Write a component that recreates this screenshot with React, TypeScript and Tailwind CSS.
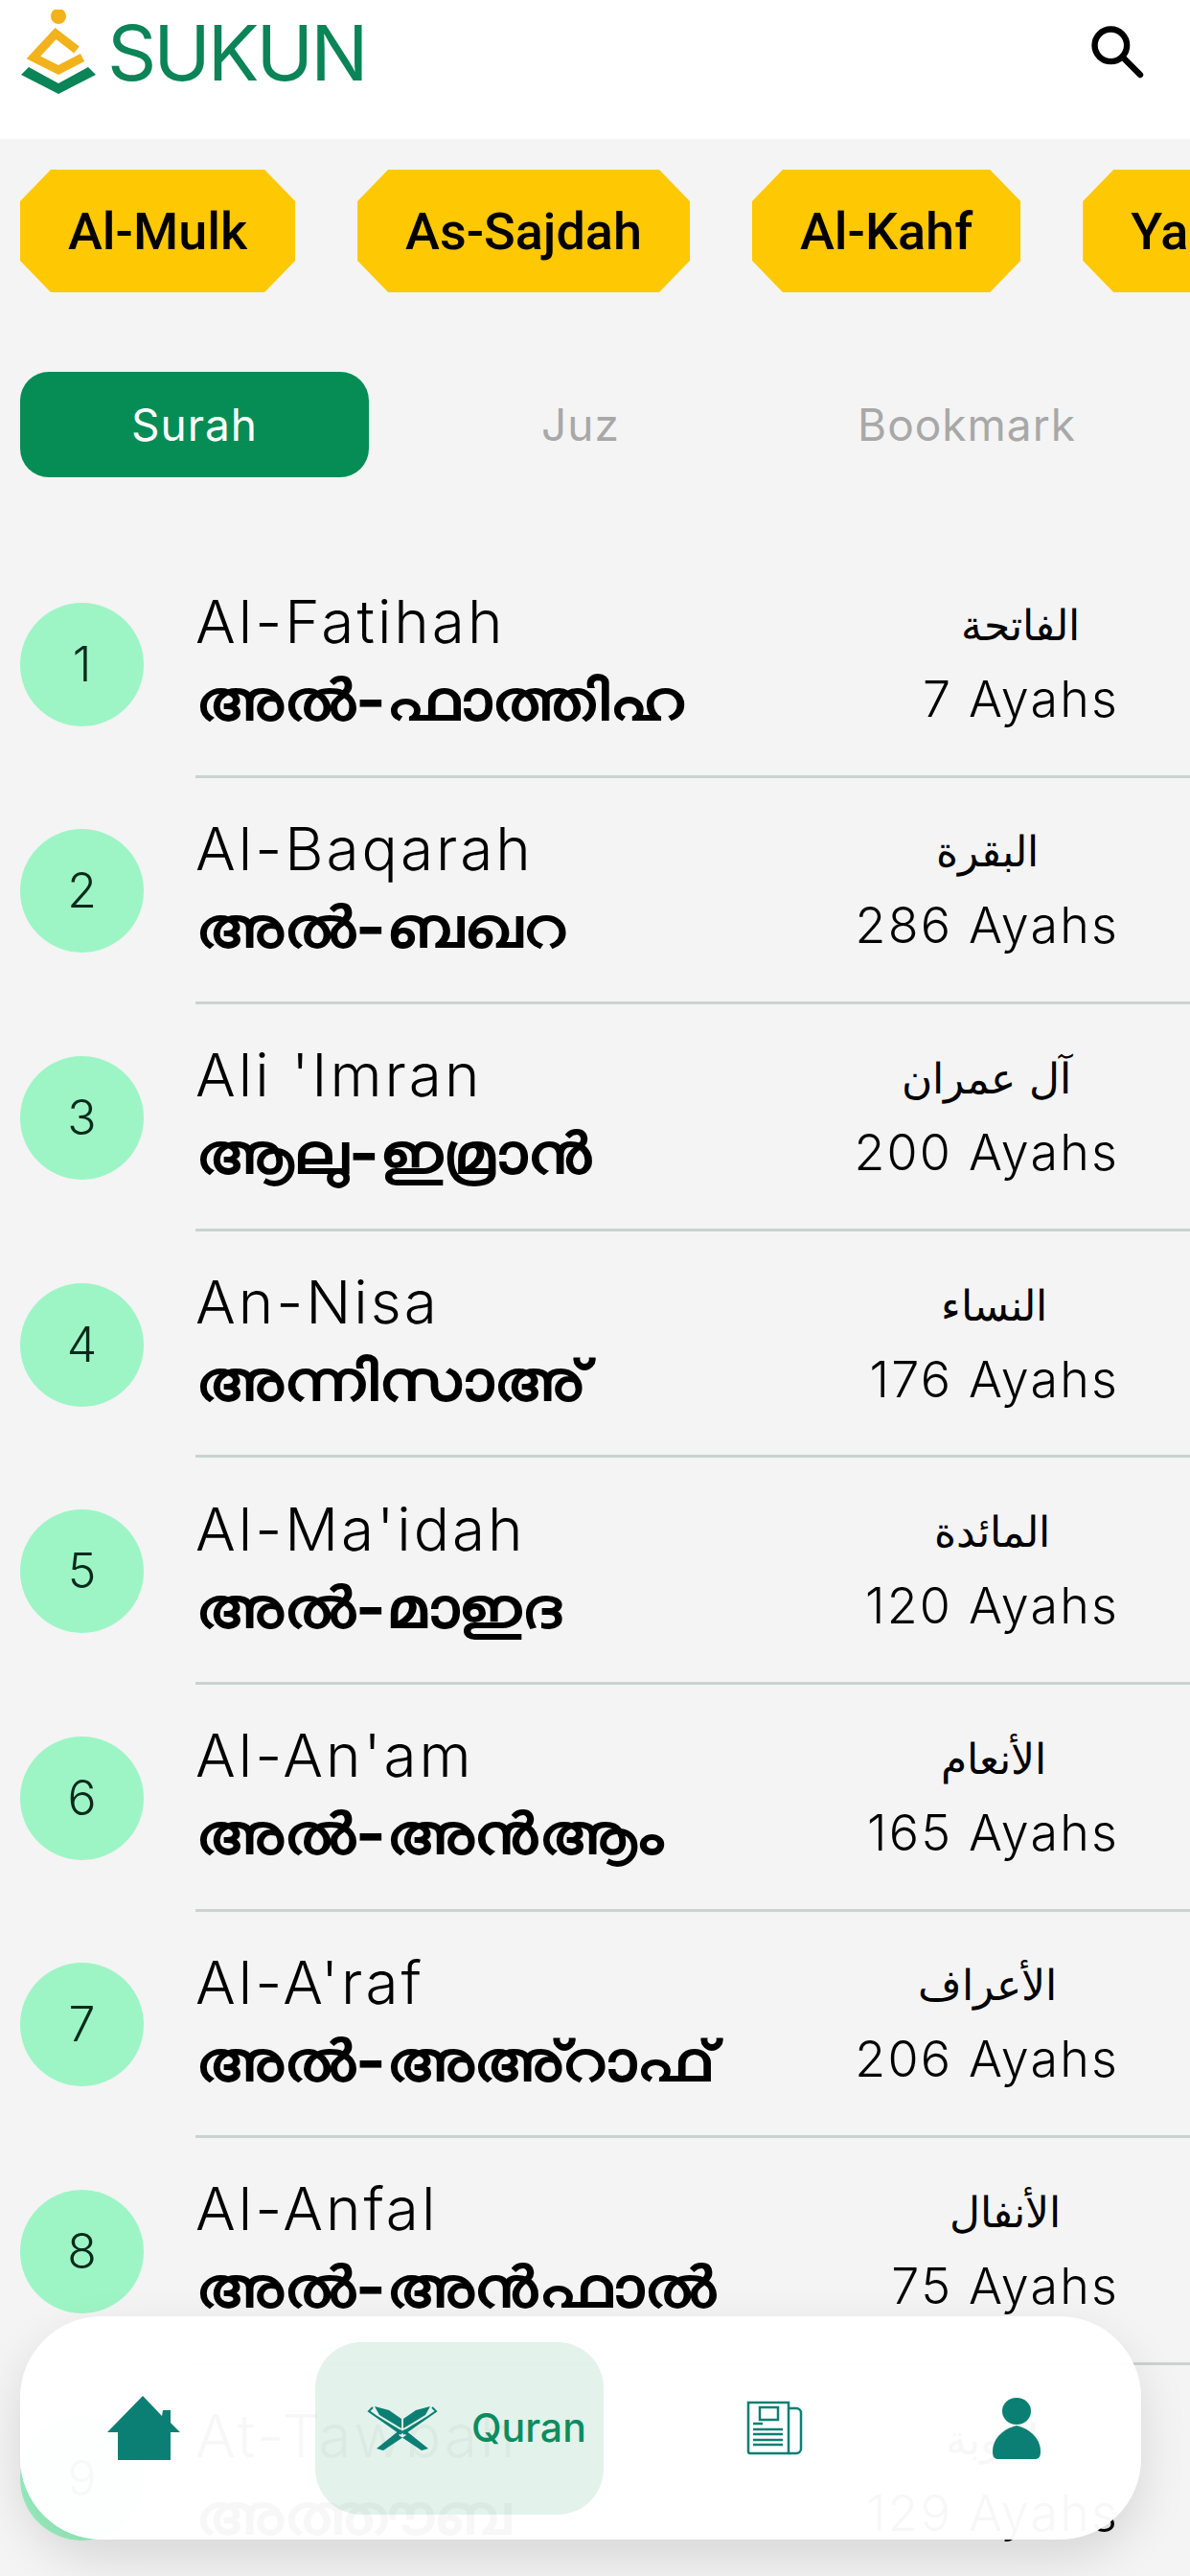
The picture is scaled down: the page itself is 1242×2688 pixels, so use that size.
const surahs = [
  { n: 1, en: "Al-Fatihah", ml: "അൽ-ഫാത്തിഹ", ar: "الفاتحة", ayahs: 7 },
  { n: 2, en: "Al-Baqarah", ml: "അൽ-ബഖറ", ar: "البقرة", ayahs: 286 },
  { n: 3, en: "Ali 'Imran", ml: "ആലു-ഇമ്രാൻ", ar: "آل عمران", ayahs: 200 },
  { n: 4, en: "An-Nisa", ml: "അന്നിസാഅ്", ar: "النساء", ayahs: 176 },
  { n: 5, en: "Al-Ma'idah", ml: "അൽ-മാഇദ", ar: "المائدة", ayahs: 120 },
  { n: 6, en: "Al-An'am", ml: "അൽ-അൻആം", ar: "الأنعام", ayahs: 165 },
  { n: 7, en: "Al-A'raf", ml: "അൽ-അഅ്റാഫ്", ar: "الأعراف", ayahs: 206 },
  { n: 8, en: "Al-Anfal", ml: "അൽ-അൻഫാൽ", ar: "الأنفال", ayahs: 75 },
  { n: 9, en: "At-Tawbah", ml: "അത്തൗബ", ar: "التوبة", ayahs: 129 },
];

const chips = ["Al-Mulk", "As-Sajdah", "Al-Kahf", "Yasin"];

function Logo() {
  return (
    <svg width="80" height="90" viewBox="0 0 80 90" className="shrink-0">
      <circle cx="39" cy="7" r="8" fill="#f2b21b" />
      <path d="M58 42 L36 25 L13 50 L39 63 L64 50" fill="none" stroke="#f2b21b" strokeWidth="9" />
      <path d="M0 68 L8 60 L39 77 L70 60 L78 68 L39 88 Z" fill="#0b8457" />
    </svg>
  );
}

function HomeIcon() {
  return (
    <svg width="76" height="68" viewBox="0 0 76 68">
      <path d="M37 0 L57 21 L58 15 L66 15 L66 28 L76 38 L66 38 L66 67 L11 67 L11 38 L0 38 Z" fill="#0b7f73" />
    </svg>
  );
}

function QuranIcon() {
  return (
    <svg width="74" height="50" viewBox="0 0 72 50">
      <path d="M7 2 L22 6 L35 15 L35 25 L12 11 Z M65 2 L50 6 L37 15 L37 25 L60 11 Z" fill="#0b7f73" />
      <path d="M5 3 L1 7 L35 31 M67 3 L71 7 L37 31 M8 12 L36 29 L64 12" stroke="#0b7f73" strokeWidth="2" fill="none" />
      <path d="M34 26 L40 32 L16 48 L9 46 Z M38 26 L32 32 L56 48 L63 46 Z" fill="#0b7f73" />
    </svg>
  );
}

function NewsIcon() {
  return (
    <svg width="59" height="57" viewBox="0 0 59 57" fill="none" stroke="#0b7f73" strokeWidth="2.5">
      <path d="M2 2 H44 V55 H4 a2 2 0 0 1 -2 -2 Z" />
      <path d="M44 8 H52 a5 5 0 0 1 5 5 V50 a5 5 0 0 1 -5 5 H44" />
      <rect x="14" y="7" width="19" height="13" />
      <path d="M7 24 H17 M7 30 H38 M7 35 H38 M7 41 H38 M7 46 H38" />
    </svg>
  );
}

function PersonIcon() {
  return (
    <svg width="50" height="64" viewBox="0 0 50 64" fill="#0b7f73">
      <ellipse cx="25" cy="14" rx="15" ry="14" />
      <path d="M25 29 C38 32 50 42 50 56 C50 62 48 64 44 64 H6 C2 64 0 62 0 56 C0 42 12 32 25 29 Z" />
    </svg>
  );
}

export default function App() {
  return (
    <div className="relative h-[2688px] w-[1242px] overflow-hidden bg-[#f4f4f4] font-['Inter','Noto_Sans',sans-serif] text-black">
      <header className="flex h-[145px] items-start justify-between bg-white pl-[22px] pr-[44px] pt-[10px]">
        <div className="flex items-start gap-[10px]">
          <Logo />
          <span className="pt-[1px] text-[80px] leading-[88px] tracking-[-3px] text-[#0b8457]">SUKUN</span>
        </div>
        <svg width="64" height="64" viewBox="0 0 24 24" className="mt-[12px]" fill="none" stroke="#000" strokeWidth="2.4">
          <circle cx="9.5" cy="9.5" r="6.3" />
          <path d="M14 14 L21 21" strokeLinecap="round" />
        </svg>
      </header>

      <div className="mt-[32px] flex h-[128px] gap-[65px] overflow-hidden pl-[21px]">
        {chips.map((c) => (
          <div
            key={c}
            className="flex h-[128px] shrink-0 items-center bg-[#fec803] px-[50px] text-[54px] font-medium [clip-path:polygon(32px_0,calc(100%-32px)_0,100%_33px,100%_calc(100%-33px),calc(100%-32px)_100%,32px_100%,0_calc(100%-33px),0_33px)] font-['Roboto',sans-serif]"
          >
            {c}
          </div>
        ))}
      </div>

      <div className="ml-[21px] mt-[83px] grid h-[110px] w-[1170px] grid-cols-3 gap-[39px] text-[46px] tracking-[1px]">
        <div className="flex items-center justify-center rounded-[30px] bg-[#068d55] text-white">Surah</div>
        <div className="flex items-center justify-center text-[#a8a8a8]">Juz</div>
        <div className="flex items-center justify-center text-[#a8a8a8]">Bookmark</div>
      </div>

      <div className="mt-[77px] pl-[21px]">
        {surahs.map((s) => (
          <div key={s.n} className="flex h-[236.6px] items-center gap-[54px]">
            <div className="flex h-[129px] w-[129px] shrink-0 items-center justify-center rounded-full bg-[#9df5c5] text-[50px] font-light text-[#0a2a1c]">
              {s.n}
            </div>
            <div className="flex h-full flex-1 items-center justify-between border-b-[3px] border-[#c9d3d0] pr-[74px]">
              <div>
                <div className="mt-[-2px] text-[62px] leading-[76px] font-light tracking-[3px]">{s.en}</div>
                <div className="mt-[3px] origin-left scale-x-[1.16] text-[58px] leading-[80px] font-extrabold">{s.ml}</div>
              </div>
              <div className="flex flex-col items-center">
                <div className="font-['DejaVu_Sans',sans-serif] text-[44px] leading-[76px] font-light" dir="rtl">{s.ar}</div>
                <div className="text-[52px] leading-[78px] font-light tracking-[2.2px]">{s.ayahs} Ayahs</div>
              </div>
            </div>
          </div>
        ))}
      </div>

      <nav className="absolute left-[21px] top-[2417px] flex h-[233px] w-[1170px] items-center rounded-[85px] bg-white/97 pl-[91px] shadow-[0_20px_50px_rgba(0,0,0,0.12)]">
        <HomeIcon />
        <div className="ml-[141px] flex h-[180px] w-[301px] items-center gap-[35px] rounded-[48px] bg-[#068d55]/11 pl-[54px]">
          <QuranIcon />
          <span className="text-[41px] font-medium text-[#0b8d5f]">Quran</span>
        </div>
        <div className="ml-[149px]">
          <NewsIcon />
        </div>
        <div className="ml-[198px]">
          <PersonIcon />
        </div>
      </nav>
    </div>
  );
}
